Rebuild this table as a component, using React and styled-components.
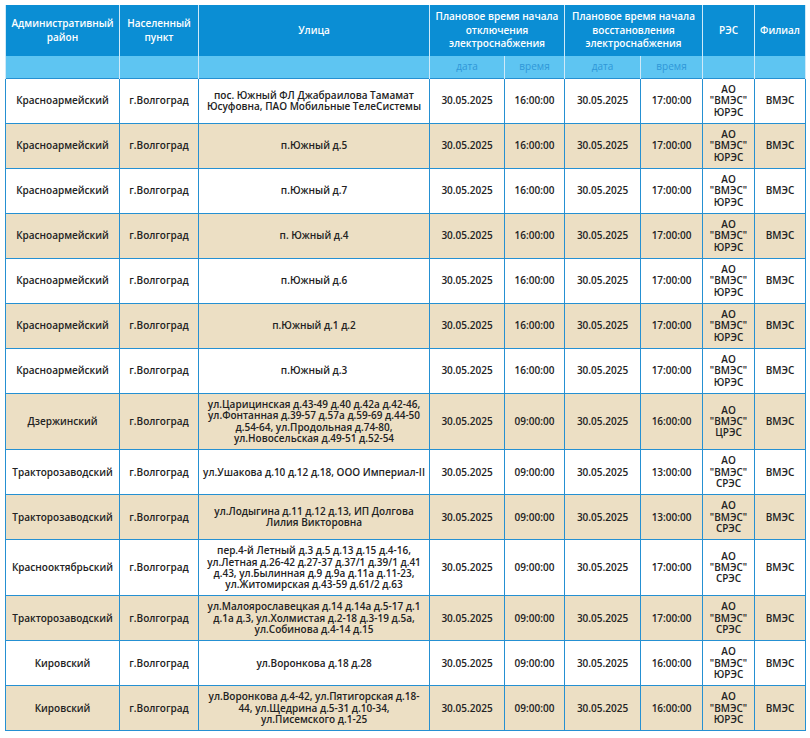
import React from 'react'
import styled, { createGlobalStyle } from 'styled-components'

const GlobalStyle = createGlobalStyle`
    body {
        margin: 0;
        background: #ffffff;
        font-family: "Open Sans", "Liberation Sans", sans-serif;
    }
`;

const Page = styled.div`
    padding: 5px 5px 5px 5px;
    width: 800px;
`;

const Table = styled.table`
    width: 800px;
    border-collapse: collapse;
    table-layout: fixed;
    color: #222222;
`;

const Head = styled.th`
    background-color: ${p => p.$sub ? '#5ec5f2' : '#0b8ed4'};
    color: ${p => p.$sub ? '#2f97d8' : '#ffffff'};
    font-size: 10px;
    font-weight: ${p => p.$sub ? 400 : 600};
    line-height: 13.5px;
    height: ${p => p.$sub ? '22px' : '51px'};
    padding: 0 4px;
    text-align: center;
    vertical-align: middle;
    border-left: 1px solid #cfe9f8;
    border-right: 1px solid #cfe9f8;
    border-top: none;
    border-bottom: none;
`;

const Row = styled.tr`
    background-color: ${p => p.$odd ? '#ecdfc4' : '#ffffff'};
`;

const Cell = styled.td`
    font-size: 10px;
    font-weight: 600;
    line-height: 11.33px;
    padding: 5px 3px 5px;
    text-align: center;
    vertical-align: middle;
    white-space: ${p => p.$pre ? 'pre-line' : 'normal'};
    border: 1px solid #2590d2;
`;

const widths = [114, 79, 231, 75, 60, 76, 62, 52, 51];

const rows = [
    ['Красноармейский', 'пос. Южный ФЛ Джабраилова Тамамат\nЮсуфовна, ПАО Мобильные ТелеСистемы', '16:00:00', '17:00:00', 'ЮРЭС'],
    ['Красноармейский', 'п.Южный д.5', '16:00:00', '17:00:00', 'ЮРЭС'],
    ['Красноармейский', 'п.Южный д.7', '16:00:00', '17:00:00', 'ЮРЭС'],
    ['Красноармейский', 'п. Южный д.4', '16:00:00', '17:00:00', 'ЮРЭС'],
    ['Красноармейский', 'п.Южный д.6', '16:00:00', '17:00:00', 'ЮРЭС'],
    ['Красноармейский', 'п.Южный д.1 д.2', '16:00:00', '17:00:00', 'ЮРЭС'],
    ['Красноармейский', 'п.Южный д.3', '16:00:00', '17:00:00', 'ЮРЭС'],
    ['Дзержинский', 'ул.Царицинская д.43-49 д.40 д.42а д.42-46,\nул.Фонтанная д.39-57 д.57а д.59-69 д.44-50\nд.54-64, ул.Продольная д.74-80,\nул.Новосельская д.49-51 д.52-54', '09:00:00', '16:00:00', 'ЦРЭС'],
    ['Тракторозаводский', 'ул.Ушакова д.10 д.12 д.18, ООО Империал-II', '09:00:00', '13:00:00', 'СРЭС'],
    ['Тракторозаводский', 'ул.Лодыгина д.11 д.12 д.13, ИП Долгова\nЛилия Викторовна', '09:00:00', '13:00:00', 'СРЭС'],
    ['Краснооктябрьский', 'пер.4-й Летный д.3 д.5 д.13 д.15 д.4-16,\nул.Летная д.26-42 д.27-37 д.37/1 д.39/1 д.41\nд.43, ул.Былинная д.9 д.9а д.11а д.11-23,\nул.Житомирская д.43-59 д.61/2 д.63', '09:00:00', '17:00:00', 'СРЭС'],
    ['Тракторозаводский', 'ул.Малоярославецкая д.14 д.14а д.5-17 д.1\nд.1а д.3, ул.Холмистая д.2-18 д.3-19 д.5а,\nул.Собинова д.4-14 д.15', '09:00:00', '17:00:00', 'СРЭС'],
    ['Кировский', 'ул.Воронкова д.18 д.28', '09:00:00', '16:00:00', 'ЮРЭС'],
    ['Кировский', 'ул.Воронкова д.4-42, ул.Пятигорская д.18-\n44, ул.Щедрина д.5-31 д.10-34,\nул.Писемского д.1-25', '09:00:00', '16:00:00', 'ЮРЭС'],
];

export default function App() {
    return (
        <Page>
            <GlobalStyle />
            <Table>
                <colgroup>
                    {widths.map((w, i) => <col key={i} style={{ width: w }} />)}
                </colgroup>
                <thead>
                    <tr>
                        <Head>Административный<br />район</Head>
                        <Head>Населенный<br />пункт</Head>
                        <Head>Улица</Head>
                        <Head colSpan={2}>Плановое время начала<br />отключения<br />электроснабжения</Head>
                        <Head colSpan={2}>Плановое время начала<br />восстановления<br />электроснабжения</Head>
                        <Head>РЭС</Head>
                        <Head>Филиал</Head>
                    </tr>
                    <tr>
                        <Head $sub></Head>
                        <Head $sub></Head>
                        <Head $sub></Head>
                        <Head $sub>дата</Head>
                        <Head $sub>время</Head>
                        <Head $sub>дата</Head>
                        <Head $sub>время</Head>
                        <Head $sub></Head>
                        <Head $sub></Head>
                    </tr>
                </thead>
                <tbody>
                    {rows.map(([district, street, off, on, res], i) => (
                        <Row key={i} $odd={i % 2 === 1}>
                            <Cell>{district}</Cell>
                            <Cell>г.Волгоград</Cell>
                            <Cell $pre>{street}</Cell>
                            <Cell>30.05.2025</Cell>
                            <Cell>{off}</Cell>
                            <Cell>30.05.2025</Cell>
                            <Cell>{on}</Cell>
                            <Cell>АО<br />"ВМЭС"<br />{res}</Cell>
                            <Cell>ВМЭС</Cell>
                        </Row>
                    ))}
                </tbody>
            </Table>
        </Page>
    )
}
